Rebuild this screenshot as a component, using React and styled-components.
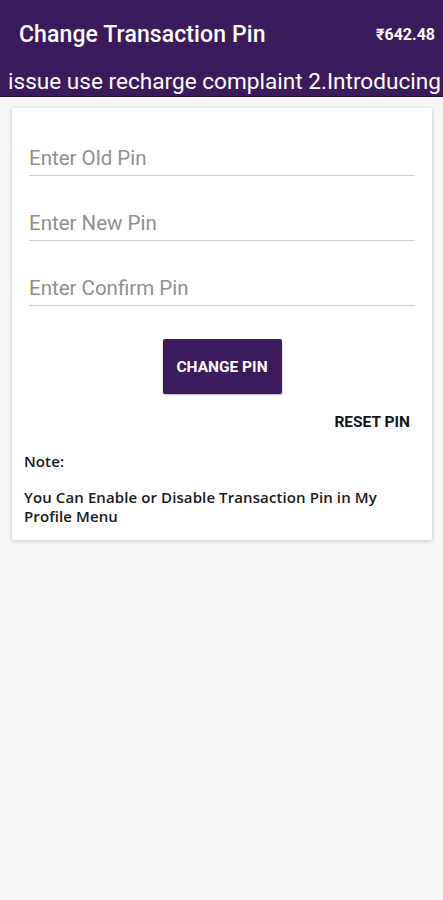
import React from "react";
import styled, { createGlobalStyle } from "styled-components";

const Global = createGlobalStyle`
  html, body { margin: 0; padding: 0; background: #f7f7f7; }
  body { font-family: Roboto, "Noto Sans", sans-serif; }
  * { box-sizing: border-box; }
`;

const Page = styled.div`
  width: 443px;
  min-height: 900px;
  background: #f7f7f7;
`;

const Header = styled.header`
  background: #3c1b5c;
  height: 97px;
  display: flex;
  flex-direction: column;
  border-bottom: 1px solid #2a1240;
`;

const TopRow = styled.div`
  display: flex;
  align-items: center;
  justify-content: space-between;
  height: 68px;
  padding: 0 8px 0 19px;
  color: #fff;
`;

const Title = styled.h1`
  margin: 0;
  font-size: 23px;
  font-weight: 500;
  letter-spacing: 0.1px;
`;

const Balance = styled.span`
  font-size: 16px;
  font-weight: 700;
`;

const Marquee = styled.div`
  white-space: nowrap;
  overflow: hidden;
  color: #fff;
  font-size: 22.6px;
  padding-left: 8px;
  line-height: 28px;
`;

const Card = styled.main`
  margin: 11px 11px 0 12px;
  background: #fff;
  box-shadow: 0 1px 4px rgba(0, 0, 0, 0.22);
  border-radius: 2px;
  padding: 34px 17px 14px 17px;
  display: flex;
  flex-direction: column;
`;

const Field = styled.input`
  display: block;
  width: 100%;
  border: none;
  border-bottom: 1.5px solid #cfcfcf;
  outline: none;
  background: transparent;
  font-family: Roboto, sans-serif;
  font-size: 20.5px;
  padding: 0 0 2px 0;
  height: 34px;
  margin-bottom: 31px;
  color: #333;
  &::placeholder { color: #8f8f8f; }
`;

const ButtonRow = styled.div`
  display: flex;
  justify-content: center;
  margin-top: 2px;
`;

const PrimaryButton = styled.button`
  width: 119px;
  height: 55px;
  background: #3c1b5c;
  color: #fff;
  border: none;
  border-radius: 2px;
  font-family: Roboto, sans-serif;
  font-weight: 700;
  font-size: 15.5px;
  box-shadow: 0 1px 2px rgba(0,0,0,0.3);
`;

const TextButton = styled.button`
  align-self: flex-end;
  margin-top: 19px;
  margin-right: 5px;
  background: none;
  border: none;
  padding: 0;
  font-family: Roboto, sans-serif;
  font-weight: 700;
  font-size: 15.5px;
  color: #151515;
`;

const Note = styled.p`
  margin: ${(p) => p.$mt}px 0 0 -5px;
  font-family: "Open Sans", sans-serif;
  font-size: 15px;
  font-weight: 600;
  color: #1a1a1a;
  line-height: 19px;
  letter-spacing: 0.1px;
`;

export default function App() {
  return (
    <Page>
      <Global />
      <Header>
        <TopRow>
          <Title>Change Transaction Pin</Title>
          <Balance>₹642.48</Balance>
        </TopRow>
        <Marquee>issue use recharge complaint 2.Introducing</Marquee>
      </Header>
      <Card>
        <Field placeholder="Enter Old Pin" />
        <Field placeholder="Enter New Pin" />
        <Field placeholder="Enter Confirm Pin" />
        <ButtonRow>
          <PrimaryButton>CHANGE PIN</PrimaryButton>
        </ButtonRow>
        <TextButton>RESET PIN</TextButton>
        <Note $mt={21}>Note:</Note>
        <Note $mt={17}>You Can Enable or Disable Transaction Pin in My Profile Menu</Note>
      </Card>
    </Page>
  );
}
